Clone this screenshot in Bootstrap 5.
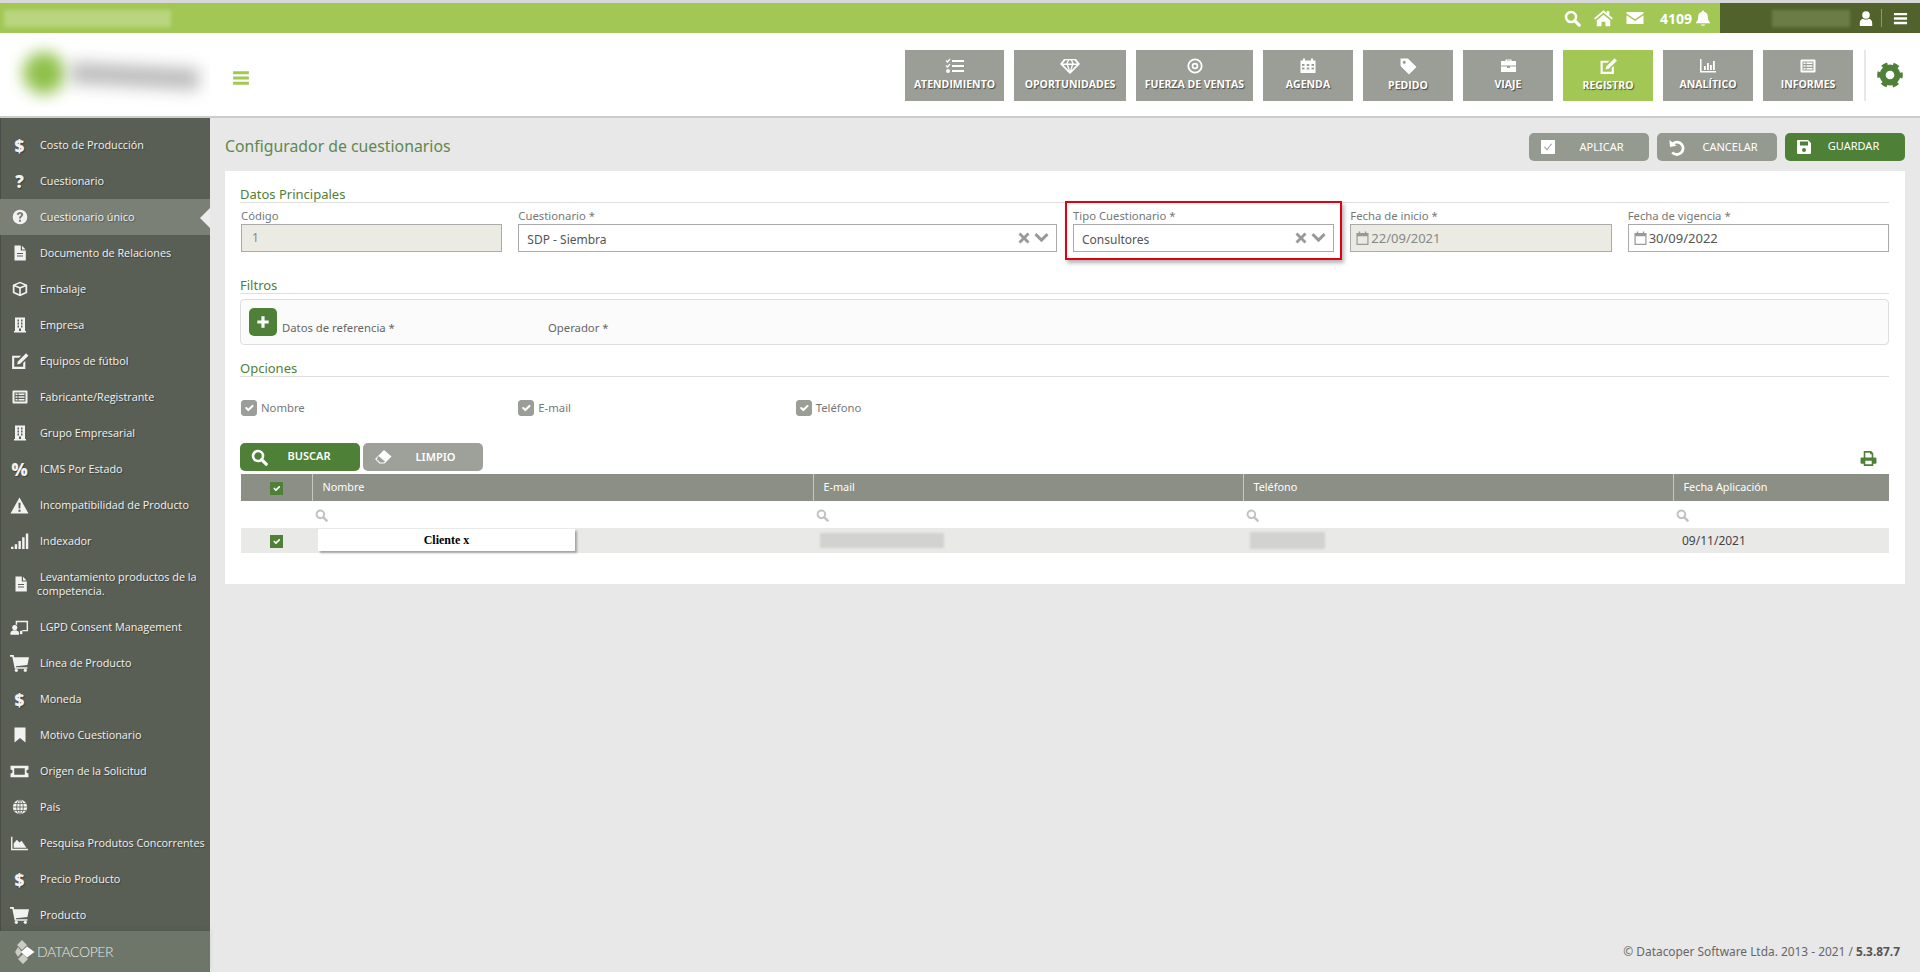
<!DOCTYPE html>
<html lang="es">
<head>
<meta charset="utf-8">
<title>Configurador de cuestionarios</title>
<link href="https://cdn.jsdelivr.net/npm/bootstrap@5.3.0/dist/css/bootstrap.min.css" rel="stylesheet">
<style>
html,body{height:972px;overflow:hidden}
body{font-family:"Noto Sans","Open Sans",sans-serif;background:#e8e8e8;color:#666;font-size:12px}
.ico{display:inline-block;fill:currentColor;flex:none}
.top-strip{height:33px;border-top:3px solid #d8d8d8;background:#a2c754;color:#fff}
.top-blur{width:167px;height:17px;margin:7px 0 0 4px;background:#b9d580;filter:blur(2px)}
.top-dark{width:200px;background:#52622c;height:100%;padding-right:12px}
.top-tools{font-family:"Open Sans",sans-serif;font-weight:700;font-size:14px;gap:12px;padding-right:9px}
.top-count{margin-left:4px;gap:3px}
.name-blur{width:78px;height:17px;background:#6b7d46;filter:blur(1.5px);margin-right:8px}
.vbar{width:1px;height:18px;background:#8d9a6d;margin:0 11px 0 7px}
.head-bar{height:85px;background:#fff;border-bottom:2px solid #ccc}
.logo-blur{width:201px;height:69px;margin:5px 0 0 9px;position:relative;overflow:hidden}
.logo-dot{width:42px;height:42px;border-radius:50%;background:#8fc048;position:absolute;left:14px;top:14px;filter:blur(8px)}
.logo-word{width:128px;height:22px;background:#bdbdbd;position:absolute;left:62px;top:27px;filter:blur(8px);transform:rotate(3deg)}
.menu-btn{color:#a2c754;margin-left:22px;padding-top:6px}
.mod-btn{height:51px;width:90px;border-radius:0;border:0;background:#9a9e97;color:#fff;font-family:"Open Sans",sans-serif;font-weight:700;font-size:10.5px;line-height:14px;padding:8px 0 0;text-shadow:1px 1px 1px rgba(0,0,0,.55);display:flex;flex-direction:column;align-items:center;gap:3px;text-transform:uppercase;white-space:nowrap}
.mod-btn.w-ate{width:99px}.mod-btn.w-opo{width:112px}.mod-btn.w-fue{width:117px}
.mod-btn:hover{background:#9a9e97;color:#fff}
.mod-btn.sel,.mod-btn.sel:hover{background:#a2c754}
.mods{gap:10px;padding-top:17px;margin-left:auto}
.gear-wrap{border-left:2px solid #e8e8e8;height:51px;margin:17px 0 0 11px;padding:12px 17px 0 11px;color:#4f8038}
.body-wrap{height:854px;position:relative}
.side{width:210px;background:#5a5f56;border-left:1px solid #4a4e46;padding-top:9px;position:relative;flex:none;color:#fff;font-family:"Open Sans",sans-serif;font-size:10.8px}
.side-link{height:36px;display:flex;align-items:center;color:#f2f2f2;padding:0;position:relative;text-shadow:1px 1px 1px rgba(0,0,0,.35);margin-left:-1px;white-space:nowrap}
.side-link:hover{color:#f2f2f2}
.side-link.tall{height:50px;white-space:normal;line-height:14px}
.side-link.on{background:#7b8077}
.side-link.on::after{content:"";position:absolute;right:0;top:9px;border:10px solid transparent;border-right-color:#ececec;border-left:0}
.side-ic{width:42px;display:flex;justify-content:center;flex:none;padding-right:1px;font-weight:800;font-size:17px;line-height:1}
.side-ic .ico{width:16px;height:16px}
.side-ic .ico.ico-w{width:19px;height:17px}
.side-link .side-ic{width:40px}
.tall .side-ic{width:37px;padding-right:0;padding-left:5px}
.tall .side-txt{text-indent:3px}
.side-foot{position:absolute;left:-1px;right:0;bottom:0;height:41px;background:#6e7569;display:flex;align-items:center;padding-left:15px;box-shadow:0 -2px 6px rgba(0,0,0,.08);font-family:"Lato",sans-serif;font-weight:300;font-size:14px;letter-spacing:-.4px;color:#e6e8e3;gap:2px}
.main-pane{padding:15px 15px 0;min-width:0}
.page-title{font-size:15.8px;color:#5f8750;margin:0;font-weight:400;line-height:26px}
.act-btn{width:120px;height:28px;border:0;border-radius:5px;background:#959a91;color:#fff;font-size:11px;padding:0 0 0 11px;display:flex;align-items:center;text-transform:uppercase}
.act-btn span{flex:1;text-align:center;padding-right:2px}
.act-btn:hover{background:#959a91;color:#fff}
.act-btn.go,.act-btn.go:hover{background:#4f8038}
.act-btn.go span{padding-right:10px;padding-bottom:1px}
.act-btn.lite,.act-btn.lite:hover{background:#9da19a}
.act-btn.lite span{padding-right:4px}
.sheet{background:#fff;margin-top:10px;padding:14px 16px 31px 15px;height:413px}
.sec-title{font-size:13px;height:18px;line-height:19px;color:#4f8038;border-bottom:1px solid #ddd}
.sec-b{margin-top:24px}
.sec-c{margin-top:14px}
.fld-grid{margin-left:-7px!important;margin-right:-8px!important;width:1664px}
.fld-row{margin-top:6px}
.fld-lbl{display:block;font-size:11.3px;line-height:14px;margin:0 0 1px;color:#777;white-space:nowrap}
.fld{height:28px;border:1px solid #aaa;border-radius:0;background:#fff;font-size:12px;color:#555;padding:3px 8px 0;display:flex;align-items:center;box-shadow:none}
.fld.off{background:#ebebe4;padding:0 0 0 10px;color:#888}
.fld.dt{padding:1px 0 0 5px;gap:2px;font-size:13px}
.fld.dt .ico{color:#999}
.fld-ctl{margin-left:auto;color:#999;gap:4px;display:flex;align-items:center;margin:-3px -1px 0 auto}
.mark-col{position:relative}
.mark-col::after{content:"";position:absolute;left:0;right:0;top:-8px;height:59px;border:2px solid #e5000f;box-shadow:2px 3px 4px rgba(0,0,0,.3);pointer-events:none}
.filter-box{height:46px;margin-top:5px;border:1px solid #ddd;border-radius:4px;background:#fbfbfb;padding:8px 8px;display:flex;font-size:11.3px;color:#666}
.add-btn{width:28px;height:28px;padding:0;border:0;border-radius:5px;background:#4f8038;color:#fff;display:flex;align-items:center;justify-content:center}
.add-btn:hover{background:#4f8038;color:#fff}
.filt-a{margin:12px 0 0 5px;width:266px;line-height:16px}
.filt-b{margin-top:12px;line-height:16px}
.chk-row{margin-top:23px;height:16px}
.opt-chk{display:flex;align-items:center;gap:4px;margin:0;padding:0;min-height:0;font-size:11.3px;color:#777;line-height:14px}
.opt-chk .form-check-input{margin:0;width:16px;height:16px;float:none;background-color:#9a9e97;border-color:#9a9e97;border-radius:3px;opacity:1}
.grid-tools{margin-top:27px;gap:3px;height:28px}
.grid-tools .act-btn{padding-left:11px;font-weight:600}
.print-ic{margin-left:auto;color:#4f8038;padding:6px 12px 0 0}
.data-tbl{margin:3px 0 0 1px;width:1648px;table-layout:fixed;border-collapse:collapse;font-size:10.8px}
.data-tbl>:not(caption)>*>*{padding:0 9px;border:0;background:transparent;box-shadow:none;vertical-align:middle}
.data-tbl thead tr{height:27px;background:#8b8f86}
.data-tbl thead th{color:#fff;font-weight:400;border-left:1px solid #c6c8c2;padding-left:10px}
.data-tbl thead th:first-child{border-left:0;text-align:center}
.data-tbl tr.flt-row{height:27px}
.data-tbl tr.flt-row td{color:#c2c2c2;padding-left:3px}
.data-tbl tr.dat-row{height:25px;background:#e9e9e7}
.data-tbl tr.dat-row td{position:relative;color:#444;font-size:12px}
.data-tbl tr.dat-row td:first-child{text-align:center}
.c-a{width:71px}.c-b{width:501px}.c-c{width:430px}.c-d{width:430px}.c-e{width:216px}
.form-check-input.tbl-chk{margin:0;width:13px;height:13px;float:none;border-radius:0;background-color:#4f8038;border-color:#4f8038;display:inline-block;vertical-align:middle}
.client-tag{position:absolute;left:6px;top:1px;width:257px;height:22px;background:#fff;box-shadow:2px 2px 2px rgba(0,0,0,.3);font-family:"Liberation Serif",serif;font-weight:700;font-size:12px;color:#000;text-align:center;line-height:22px}
.blur-a,.blur-b{height:15px;background:#d2d2d0;filter:blur(1px)}
.blur-a{width:124px;margin-left:-2px}
.blur-b{width:75px;height:17px;margin-left:-2px}
.foot-txt{text-align:right;font-size:11.9px;color:#666;padding:0 5px 11px 0;margin-top:auto}
.foot-txt b{color:#555}
</style>
</head>
<body>
<svg width="0" height="0" class="position-absolute" aria-hidden="true">
<symbol id="i-search" viewBox="0 0 16 16"><circle cx="6.6" cy="6.6" r="4.7" fill="none" stroke="currentColor" stroke-width="2.4"/><path d="M10 10l4.3 4.3" fill="none" stroke="currentColor" stroke-width="3" stroke-linecap="round"/></symbol>
<symbol id="i-home" viewBox="0 0 18 16"><path d="M9 1.2.6 8.2l1 1.2L9 3.3l7.4 6.1 1-1.2-3.2-2.7V1.8h-2.2v1.8zM3 10 9 5l6 5v5.400h-4.300v-4H7.300v4H3z"/></symbol>
<symbol id="i-env" viewBox="0 0 18 14"><path d="M.5 1h17v1.500L9 8.300.5 2.500zM.5 4.300 9 10l8.500-5.700V13H.5z"/></symbol>
<symbol id="i-bell" viewBox="0 0 16 16"><path d="M8 .5a1.100 1.100 0 0 1 1.100 1.200c2.500.5 3.700 2.500 3.700 5 0 3 .9 4.500 2.200 5.600v1H1v-1c1.300-1.100 2.200-2.600 2.200-5.600 0-2.500 1.200-4.500 3.700-5A1.100 1.100 0 0 1 8 .5zM6 14.400h4a2 1.300 0 0 1-4 0z"/></symbol>
<symbol id="i-user" viewBox="0 0 16 16"><circle cx="8" cy="4.500" r="3.800"/><path d="M1.800 15.500v-3c0-2.600 1.800-4.200 3.400-4.300 1.700 1.200 3.900 1.200 5.600 0 1.600.1 3.400 1.700 3.400 4.300v3z"/></symbol>
<symbol id="i-bars" viewBox="0 0 16 16"><path d="M1 2h14v2.600H1zM1 6.700h14v2.600H1zM1 11.400h14V14H1z"/></symbol>
<symbol id="i-tasks" viewBox="0 0 20 16"><path d="M7 2h12v2H7zM7 7h12v2H7zM7 12h12v2H7z"/><path d="M1 2.500l1.500 1.500L5 1M1 7.500 2.500 9 5 6" fill="none" stroke="currentColor" stroke-width="1.200"/><circle cx="3" cy="13" r="2"/></symbol>
<symbol id="i-gem" viewBox="0 0 20 16"><path fill-rule="evenodd" d="M4 1h12l4 5-10 10L0 6zM5.500 2.300 2.800 5.500h3.400L7.800 2.300zM12.200 2.300l1.600 3.200h3.400l-2.700-3.200zM9.200 2.300 7.700 5.500h4.600l-1.500-3.200zM3.500 7l5 5.300L6.800 7zM16.500 7h-3.300l-1.700 5.300zM8.300 7 10 13l1.700-6z"/></symbol>
<symbol id="i-target" viewBox="0 0 16 16"><circle cx="8" cy="8" r="6.700" fill="none" stroke="currentColor" stroke-width="1.800"/><circle cx="8" cy="8" r="3.300"/><circle cx="8" cy="8" r="1.600" fill="#9a9e97"/></symbol>
<symbol id="i-cal" viewBox="0 0 16 16"><path fill-rule="evenodd" d="M3 2.500V.5h2v2h6v-2h2v2h2.500V15H.5V2.500zM2 6v2h2.500V6zM6.700 6v2h2.600V6zM11.500 6v2H14V6zM2 9.500v2h2.500v-2zM6.700 9.500v2h2.600v-2zM11.500 9.500v2H14v-2z"/></symbol>
<symbol id="i-tag" viewBox="0 0 16 16"><path fill-rule="evenodd" d="M.5.500h7L15.500 8.500 8.500 15.500.5 7.500zM4 2.500a1.500 1.500 0 1 0 0 3 1.500 1.500 0 0 0 0-3z"/></symbol>
<symbol id="i-brief" viewBox="0 0 16 16"><path fill-rule="evenodd" d="M5 3V1.500h6V3h4.500v4.500H.5V3zM6.500 3h3v-.5h-3zM.5 8.500h6V10h3V8.500h6V14H.5z"/></symbol>
<symbol id="i-edit" viewBox="0 0 18 16"><path fill-rule="evenodd" d="M2 2.500h8.500L8.500 4.500H4v8.500h8.500V9.500l2-2V15H2z"/><path d="M15.200.3l2.200 2.200L9.700 10.200l-3 .7.700-3z"/></symbol>
<symbol id="i-chart" viewBox="0 0 18 16"><path d="M1 1h1.500v12H17v1.500H1zM5 8h1.800v4H5zM8 5h1.800v7H8zM11 7h1.800v5H11zM14 3h1.800v9H14z"/></symbol>
<symbol id="i-list" viewBox="0 0 16 16"><path fill-rule="evenodd" d="M1.500 1.500h13a1 1 0 0 1 1 1v11a1 1 0 0 1-1 1h-13a1 1 0 0 1-1-1v-11a1 1 0 0 1 1-1zM2.500 3.500v9h11v-9zM3.500 4.500h2v1.500h-2zM6.500 4.500h6v1.500h-6zM3.500 7.200h2v1.500h-2zM6.500 7.200h6v1.500h-6zM3.500 10h2v1.500h-2zM6.500 10h6v1.500h-6z"/></symbol>
<symbol id="i-gear" viewBox="0 0 24 24"><circle cx="12" cy="12" r="6.800" fill="none" stroke="currentColor" stroke-width="5.600"/><circle cx="12" cy="12" r="10" fill="none" stroke="currentColor" stroke-width="3.600" stroke-dasharray="5.300 5.170" stroke-dashoffset="2.600"/></symbol>
<symbol id="i-undo" viewBox="0 0 16 16"><path d="M4.700 4.300A5.800 5.800 0 1 1 4 12.600" fill="none" stroke="currentColor" stroke-width="2.600"/><path d="M1.300 1l.6 6.500 6.300-1.200z"/></symbol>
<symbol id="i-save" viewBox="0 0 16 16"><path fill-rule="evenodd" d="M2 1h10l3 3v10a1 1 0 0 1-1 1H2a1 1 0 0 1-1-1V2a1 1 0 0 1 1-1zM4 2.500v4h8v-4zM8 9a2 2 0 1 0 0 4 2 2 0 0 0 0-4z"/></symbol>
<symbol id="i-eraser" viewBox="0 0 18 16"><path d="M10 1 17.500 7.500 10.500 14.500H5.500L1 10z"/><path d="M4.500 7 11 12.500 9.800 13.500H6L2.700 10.200z" fill="#9da19a"/></symbol>
<symbol id="i-print" viewBox="0 0 16 16"><path fill-rule="evenodd" d="M3.500 1h7l2 2v4h2a1 1 0 0 1 1 1v4a1 1 0 0 1-1 1h-2v2h-9v-2h-2a1 1 0 0 1-1-1V8a1 1 0 0 1 1-1h2zM5 2.500V7h6V4H9.500V2.500zM5 10v3.500h6V10z"/></symbol>
<symbol id="i-plus" viewBox="0 0 16 16"><path d="M6.200 1.500h3.600v4.700h4.700v3.600H9.800v4.700H6.200V9.800H1.500V6.200h4.700z"/></symbol>
<symbol id="i-qc" viewBox="0 0 16 16"><path fill-rule="evenodd" d="M8 .7a7.300 7.300 0 1 1 0 14.600A7.300 7.300 0 0 1 8 .7zM7 10.800v2h2v-2zM8 3C6.200 3 5 4 4.800 5.700l2 .3c.1-.8.500-1.200 1.200-1.200.6 0 1 .3 1 .9 0 1.200-2.100 1.300-2.100 3.500v.3h2c0-1.500 2.300-1.700 2.300-3.900C11.200 4 9.800 3 8 3z"/></symbol>
<symbol id="i-file" viewBox="0 0 16 16"><path fill-rule="evenodd" d="M2.500.5h6.300v5h5v10H2.500zM10 .8 13.500 4.500H10zM5 8v1h6V8zM5 10.500v1h6v-1z"/></symbol>
<symbol id="i-box" viewBox="0 0 16 16"><path fill-rule="evenodd" d="M8 .7l7.200 3V12L8 15.300.8 12V3.700zM8 2.300 3.500 4.200 8 6l4.500-1.800zM2.500 5.500v5.400l4.700 2.100V7.400zM13.500 5.500 8.800 7.400V13l4.700-2.100z"/></symbol>
<symbol id="i-bldg" viewBox="0 0 16 16"><path fill-rule="evenodd" d="M3 .5h10v13.500h1V15.500H2V14h1zM5.500 2.500v2h1.500v-2zM9 2.500v2h1.500v-2zM5.500 5.500v2h1.500v-2zM9 5.500v2h1.500v-2zM5.500 8.500v2h1.500v-2zM9 8.500v2h1.500v-2zM7 11.500V14h2v-2.500z"/></symbol>
<symbol id="i-warn" viewBox="0 0 18 16"><path fill-rule="evenodd" d="M9 .5l8.500 15H.5zM8 5.500l.2 5.300h1.600l.2-5.300zM8 12v2h2v-2z"/></symbol>
<symbol id="i-sig" viewBox="0 0 18 16"><path d="M1 13h2.300v2H1zM4.500 10.500h2.300V15H4.500zM8 7.500h2.300V15H8zM11.500 4h2.300v11h-2.300zM15 .5h2.300V15H15z"/></symbol>
<symbol id="i-lgpd" viewBox="0 0 20 16"><path d="M6 1h13v11h-6v-1.500h4.500v-8h-10V5H6z"/><circle cx="5" cy="8" r="2.700"/><path d="M.5 15.500v-1.500C.5 12 2.500 11 5 11s4.500 1 4.500 3v1.500z"/><path d="M10.500 11.500h2.500V15h-2.500z"/></symbol>
<symbol id="i-cart" viewBox="0 0 18 16"><path d="M0 0h3.500l.5 2H18l-1.500 7.500L5.500 10.500l.3 1h10.700v1.500H4.500L2.200 1.500H0z"/><circle cx="6" cy="14.500" r="1.500"/><circle cx="14.500" cy="14.500" r="1.500"/></symbol>
<symbol id="i-book" viewBox="0 0 16 16"><path d="M2.500.5h11v15L8 11l-5.500 4.500z"/></symbol>
<symbol id="i-ticket" viewBox="0 0 18 16"><path fill-rule="evenodd" d="M.5 2.500h17V6a2 2 0 0 0 0 4v3.500H.5V10a2 2 0 0 0 0-4zM4 5v6h10V5z"/></symbol>
<symbol id="i-globe" viewBox="0 0 16 16"><circle cx="8" cy="8" r="7.200"/><path d="M8 .8v14.400M.8 8h14.400M1.800 4.500h12.400M1.800 11.500h12.400" stroke="#5a5f56" stroke-width=".8" fill="none"/><ellipse cx="8" cy="8" rx="3.300" ry="7.200" fill="none" stroke="#5a5f56" stroke-width=".8"/></symbol>
<symbol id="i-area" viewBox="0 0 18 16"><path d="M1 1.500h1.300V13H17v1.500H1zM3.500 12V8l3-3.500L9 7l2-1.500L15.500 12z"/></symbol>
<symbol id="i-x" viewBox="0 0 12 12"><path d="M.5 2.500 2.500.5 6 4 9.500.5l2 2L8 6l3.500 3.500-2 2L6 8l-3.500 3.500-2-2L4 6z"/></symbol>
<symbol id="i-chev" viewBox="0 0 14 12"><path d="M2 1 7 6l5-5 2 2.200-7 7-7-7z"/></symbol>
<symbol id="i-calo" viewBox="0 0 14 16"><path fill-rule="evenodd" d="M3 2V.5h1.500V2h5V.5H11V2h2.500v13H.5V2zM1.800 5.500v8.200h10.400V5.500z"/></symbol>
<symbol id="i-sq" viewBox="0 0 16 16"><path fill-rule="evenodd" d="M1 1h14v14H1zM4 8l3 3.500L12 5l-.8-.6L7 10 4.800 7.400z"/></symbol>
<symbol id="i-diamonds" viewBox="0 0 20 24"><path d="M7 0l5 5-5 5-5-5zM3 7l4 5-4 5-3-5zM8 14l5 5-5 5-5-5z" fill="#c9cdc4"/><path d="M12 6.500l7.500 5.500-7.500 5.500-6-5.500z" fill="#fff"/></symbol>
</svg>

<div class="top-strip d-flex justify-content-between align-items-stretch">
  <div class="top-blur"></div>
  <div class="d-flex align-items-center">
    <div class="top-tools d-flex align-items-center">
      <svg class="ico" width="17" height="17"><use href="#i-search"/></svg>
      <svg class="ico" width="21" height="18"><use href="#i-home"/></svg>
      <svg class="ico" width="18" height="14"><use href="#i-env"/></svg>
      <span class="d-flex align-items-center top-count">4109<svg class="ico" width="16" height="18"><use href="#i-bell"/></svg></span>
    </div>
    <div class="top-dark d-flex align-items-center justify-content-end">
      <div class="name-blur"></div>
      <svg class="ico" width="16" height="17"><use href="#i-user"/></svg>
      <div class="vbar"></div>
      <svg class="ico" width="15" height="15"><use href="#i-bars"/></svg>
    </div>
  </div>
</div>

<header class="head-bar d-flex">
  <div class="logo-blur"><div class="logo-dot"></div><div class="logo-word"></div></div>
  <div class="menu-btn d-flex align-items-center"><svg class="ico" width="18" height="18"><use href="#i-bars"/></svg></div>
  <div class="mods d-flex">
    <button class="btn mod-btn w-ate" type="button"><svg class="ico" width="20" height="16"><use href="#i-tasks"/></svg>Atendimiento</button>
    <button class="btn mod-btn w-opo" type="button"><svg class="ico" width="20" height="16"><use href="#i-gem"/></svg>Oportunidades</button>
    <button class="btn mod-btn w-fue" type="button"><svg class="ico" width="16" height="16"><use href="#i-target"/></svg>Fuerza de ventas</button>
    <button class="btn mod-btn" type="button"><svg class="ico" width="16" height="16"><use href="#i-cal"/></svg>Agenda</button>
    <button class="btn mod-btn" type="button"><svg class="ico" width="17" height="17"><use href="#i-tag"/></svg>Pedido</button>
    <button class="btn mod-btn" type="button"><svg class="ico" width="17" height="16"><use href="#i-brief"/></svg>Viaje</button>
    <button class="btn mod-btn sel" type="button"><svg class="ico" width="20" height="17"><use href="#i-edit"/></svg>Registro</button>
    <button class="btn mod-btn" type="button"><svg class="ico" width="18" height="16"><use href="#i-chart"/></svg>Analítico</button>
    <button class="btn mod-btn" type="button"><svg class="ico" width="16" height="16"><use href="#i-list"/></svg>Informes</button>
  </div>
  <div class="gear-wrap"><svg class="ico" width="26" height="26"><use href="#i-gear"/></svg></div>
</header>

<div class="body-wrap d-flex">
  <nav class="side nav flex-column flex-nowrap">
    <a class="side-link nav-link" href="#"><span class="side-ic">$</span><span class="side-txt">Costo de Producción</span></a>
    <a class="side-link nav-link" href="#"><span class="side-ic">?</span><span class="side-txt">Cuestionario</span></a>
    <a class="side-link nav-link on" href="#"><span class="side-ic"><svg class="ico"><use href="#i-qc"/></svg></span><span class="side-txt">Cuestionario único</span></a>
    <a class="side-link nav-link" href="#"><span class="side-ic"><svg class="ico"><use href="#i-file"/></svg></span><span class="side-txt">Documento de Relaciones</span></a>
    <a class="side-link nav-link" href="#"><span class="side-ic"><svg class="ico"><use href="#i-box"/></svg></span><span class="side-txt">Embalaje</span></a>
    <a class="side-link nav-link" href="#"><span class="side-ic"><svg class="ico"><use href="#i-bldg"/></svg></span><span class="side-txt">Empresa</span></a>
    <a class="side-link nav-link" href="#"><span class="side-ic"><svg class="ico ico-w"><use href="#i-edit"/></svg></span><span class="side-txt">Equipos de fútbol</span></a>
    <a class="side-link nav-link" href="#"><span class="side-ic"><svg class="ico"><use href="#i-list"/></svg></span><span class="side-txt">Fabricante/Registrante</span></a>
    <a class="side-link nav-link" href="#"><span class="side-ic"><svg class="ico"><use href="#i-bldg"/></svg></span><span class="side-txt">Grupo Empresarial</span></a>
    <a class="side-link nav-link" href="#"><span class="side-ic">%</span><span class="side-txt">ICMS Por Estado</span></a>
    <a class="side-link nav-link" href="#"><span class="side-ic"><svg class="ico ico-w"><use href="#i-warn"/></svg></span><span class="side-txt">Incompatibilidad de Producto</span></a>
    <a class="side-link nav-link" href="#"><span class="side-ic"><svg class="ico ico-w"><use href="#i-sig"/></svg></span><span class="side-txt">Indexador</span></a>
    <a class="side-link nav-link tall" href="#"><span class="side-ic"><svg class="ico"><use href="#i-file"/></svg></span><span class="side-txt">Levantamiento productos de la competencia.</span></a>
    <a class="side-link nav-link" href="#"><span class="side-ic"><svg class="ico ico-w"><use href="#i-lgpd"/></svg></span><span class="side-txt">LGPD Consent Management</span></a>
    <a class="side-link nav-link" href="#"><span class="side-ic"><svg class="ico ico-w"><use href="#i-cart"/></svg></span><span class="side-txt">Línea de Producto</span></a>
    <a class="side-link nav-link" href="#"><span class="side-ic">$</span><span class="side-txt">Moneda</span></a>
    <a class="side-link nav-link" href="#"><span class="side-ic"><svg class="ico"><use href="#i-book"/></svg></span><span class="side-txt">Motivo Cuestionario</span></a>
    <a class="side-link nav-link" href="#"><span class="side-ic"><svg class="ico ico-w"><use href="#i-ticket"/></svg></span><span class="side-txt">Origen de la Solicitud</span></a>
    <a class="side-link nav-link" href="#"><span class="side-ic"><svg class="ico"><use href="#i-globe"/></svg></span><span class="side-txt">País</span></a>
    <a class="side-link nav-link" href="#"><span class="side-ic"><svg class="ico ico-w"><use href="#i-area"/></svg></span><span class="side-txt">Pesquisa Produtos Concorrentes</span></a>
    <a class="side-link nav-link" href="#"><span class="side-ic">$</span><span class="side-txt">Precio Producto</span></a>
    <a class="side-link nav-link" href="#"><span class="side-ic"><svg class="ico ico-w"><use href="#i-cart"/></svg></span><span class="side-txt">Producto</span></a>
    <div class="side-foot"><svg class="ico" width="20" height="24"><use href="#i-diamonds"/></svg><span>DATACOPER</span></div>
  </nav>

  <main class="main-pane flex-grow-1 d-flex flex-column">
    <div class="d-flex justify-content-between">
      <h1 class="page-title">Configurador de cuestionarios</h1>
      <div class="d-flex gap-2">
        <button class="btn act-btn" type="button"><svg class="ico" width="16" height="16"><use href="#i-sq"/></svg><span>Aplicar</span></button>
        <button class="btn act-btn" type="button"><svg class="ico" width="17" height="17"><use href="#i-undo"/></svg><span>Cancelar</span></button>
        <button class="btn act-btn go" type="button"><svg class="ico" width="16" height="16"><use href="#i-save"/></svg><span>Guardar</span></button>
      </div>
    </div>

    <section class="sheet">
      <div class="sec-title">Datos Principales</div>
      <div class="row gx-3 fld-row mx-0 fld-grid">
        <div class="col-2"><label class="fld-lbl">Código</label><div class="fld off">1</div></div>
        <div class="col-4"><label class="fld-lbl">Cuestionario *</label><div class="fld">SDP - Siembra<span class="fld-ctl"><svg class="ico" width="12" height="12"><use href="#i-x"/></svg><svg class="ico" width="15" height="12"><use href="#i-chev"/></svg></span></div></div>
        <div class="col-2 mark-col"><label class="fld-lbl">Tipo Cuestionario *</label><div class="fld">Consultores<span class="fld-ctl"><svg class="ico" width="12" height="12"><use href="#i-x"/></svg><svg class="ico" width="15" height="12"><use href="#i-chev"/></svg></span></div></div>
        <div class="col-2"><label class="fld-lbl">Fecha de inicio *</label><div class="fld off dt"><svg class="ico" width="13" height="15"><use href="#i-calo"/></svg>22/09/2021</div></div>
        <div class="col-2"><label class="fld-lbl">Fecha de vigencia *</label><div class="fld dt"><svg class="ico" width="13" height="15"><use href="#i-calo"/></svg>30/09/2022</div></div>
      </div>

      <div class="sec-title sec-b">Filtros</div>
      <div class="filter-box">
        <button class="btn add-btn" type="button" aria-label="Agregar"><svg class="ico" width="14" height="14"><use href="#i-plus"/></svg></button>
        <div class="filt-a">Datos de referencia *</div>
        <div class="filt-b">Operador *</div>
      </div>

      <div class="sec-title sec-c">Opciones</div>
      <div class="row gx-3 chk-row mx-0 fld-grid">
        <div class="col-2"><label class="form-check opt-chk"><input class="form-check-input" type="checkbox" checked disabled>Nombre</label></div>
        <div class="col-2"><label class="form-check opt-chk"><input class="form-check-input" type="checkbox" checked disabled>E-mail</label></div>
        <div class="col-2"><label class="form-check opt-chk"><input class="form-check-input" type="checkbox" checked disabled>Teléfono</label></div>
      </div>

      <div class="grid-tools d-flex">
        <button class="btn act-btn go" type="button"><svg class="ico" width="17" height="17"><use href="#i-search"/></svg><span>Buscar</span></button>
        <button class="btn act-btn lite" type="button"><svg class="ico" width="18" height="16"><use href="#i-eraser"/></svg><span>Limpio</span></button>
        <div class="print-ic"><svg class="ico" width="17" height="17"><use href="#i-print"/></svg></div>
      </div>

      <table class="table data-tbl mb-0">
        <colgroup><col class="c-a"><col class="c-b"><col class="c-c"><col class="c-d"><col class="c-e"></colgroup>
        <thead><tr>
          <th><input class="form-check-input tbl-chk" type="checkbox" checked aria-label="Todos"></th>
          <th>Nombre</th><th>E-mail</th><th>Teléfono</th><th>Fecha Aplicación</th>
        </tr></thead>
        <tbody>
          <tr class="flt-row"><td></td>
            <td><svg class="ico" width="13" height="13"><use href="#i-search"/></svg></td>
            <td><svg class="ico" width="13" height="13"><use href="#i-search"/></svg></td>
            <td><svg class="ico" width="13" height="13"><use href="#i-search"/></svg></td>
            <td><svg class="ico" width="13" height="13"><use href="#i-search"/></svg></td>
          </tr>
          <tr class="dat-row">
            <td><input class="form-check-input tbl-chk" type="checkbox" checked aria-label="Seleccionar"></td>
            <td><div class="client-tag">Cliente x</div></td>
            <td><div class="blur-a"></div></td>
            <td><div class="blur-b"></div></td>
            <td>09/11/2021</td>
          </tr>
        </tbody>
      </table>
    </section>

    <footer class="foot-txt">© Datacoper Software Ltda. 2013 - 2021 / <b>5.3.87.7</b></footer>
  </main>
</div>
</body>
</html>
